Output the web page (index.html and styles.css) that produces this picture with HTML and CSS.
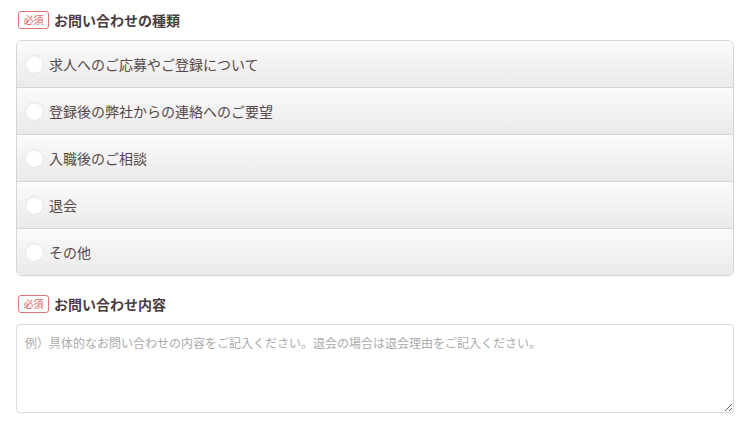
FILE: index.html
```html
<!DOCTYPE html>
<html lang="ja">
<head>
<meta charset="utf-8">
<link rel="stylesheet" href="styles.css">
</head>
<body>
<form class="form">
  <div class="field">
    <div class="label"><span class="req">必須</span><span class="label-text">お問い合わせの種類</span></div>
    <div class="radios">
      <label class="opt"><input type="radio" name="kind"><span class="dot"></span><span>求人へのご応募やご登録について</span></label>
      <label class="opt"><input type="radio" name="kind"><span class="dot"></span><span>登録後の弊社からの連絡へのご要望</span></label>
      <label class="opt"><input type="radio" name="kind"><span class="dot"></span><span>入職後のご相談</span></label>
      <label class="opt"><input type="radio" name="kind"><span class="dot"></span><span>退会</span></label>
      <label class="opt"><input type="radio" name="kind"><span class="dot"></span><span>その他</span></label>
    </div>
  </div>
  <div class="field field2">
    <div class="label"><span class="req">必須</span><span class="label-text">お問い合わせ内容</span></div>
    <textarea class="ta" placeholder="例）具体的なお問い合わせの内容をご記入ください。退会の場合は退会理由をご記入ください。"></textarea>
  </div>
</form>
</body>
</html>
```
FILE: styles.css
```css
* { box-sizing: border-box; }
html, body { margin: 0; padding: 0; background: #fff; }
body {
  font-family: "Noto Sans CJK JP", "Noto Sans", sans-serif;
  color: #4a3d3d;
}
.form { padding: 11px 16px 0 16px; width: 750px; }
.label {
  display: flex;
  align-items: center;
  gap: 5px;
  height: 18px;
  margin-left: 2px;
}
.req {
  display: inline-flex;
  align-items: center;
  justify-content: center;
  height: 18px;
  width: 31px;
  border: 1px solid #e07474;
  border-radius: 3px;
  color: #e05a5a;
  font-size: 10px;
  line-height: 1;
}
.label-text {
  font-weight: bold;
  font-size: 14px;
  line-height: 18px;
  color: #4a3d3d;
}
.radios {
  margin-top: 11px;
  width: 718px;
  border: 1px solid #d6d4d4;
  border-radius: 6px;
  overflow: hidden;
  box-shadow: 0 1px 1px rgba(0,0,0,0.04);
}
.opt {
  display: flex;
  align-items: center;
  height: 47px;
  padding-left: 8px;
  background: linear-gradient(#fbfbfb, #ebe9e9);
  border-top: 1px solid #d6d4d4;
  font-size: 14px;
  color: #554848;
  cursor: pointer;
}
.opt:first-child { border-top: none; height: 46px; }
.opt input { display: none; }
.dot {
  width: 19px;
  height: 19px;
  border-radius: 50%;
  background: #fff;
  border: 1px solid #e6e4e4;
  box-shadow: inset 0 1px 1px rgba(0,0,0,0.04);
  margin-right: 5px;
  flex: none;
}
.field2 { margin-top: 19px; }
.ta {
  display: block;
  margin-top: 11px;
  width: 718px;
  height: 89px;
  border: 1px solid #dcdcdc;
  border-radius: 4px;
  padding: 9px 8px;
  font-family: "Noto Sans CJK JP", "Noto Sans", sans-serif;
  font-size: 12px;
  color: #444;
  resize: vertical;
}
.ta::placeholder { color: #aaa; }
```
